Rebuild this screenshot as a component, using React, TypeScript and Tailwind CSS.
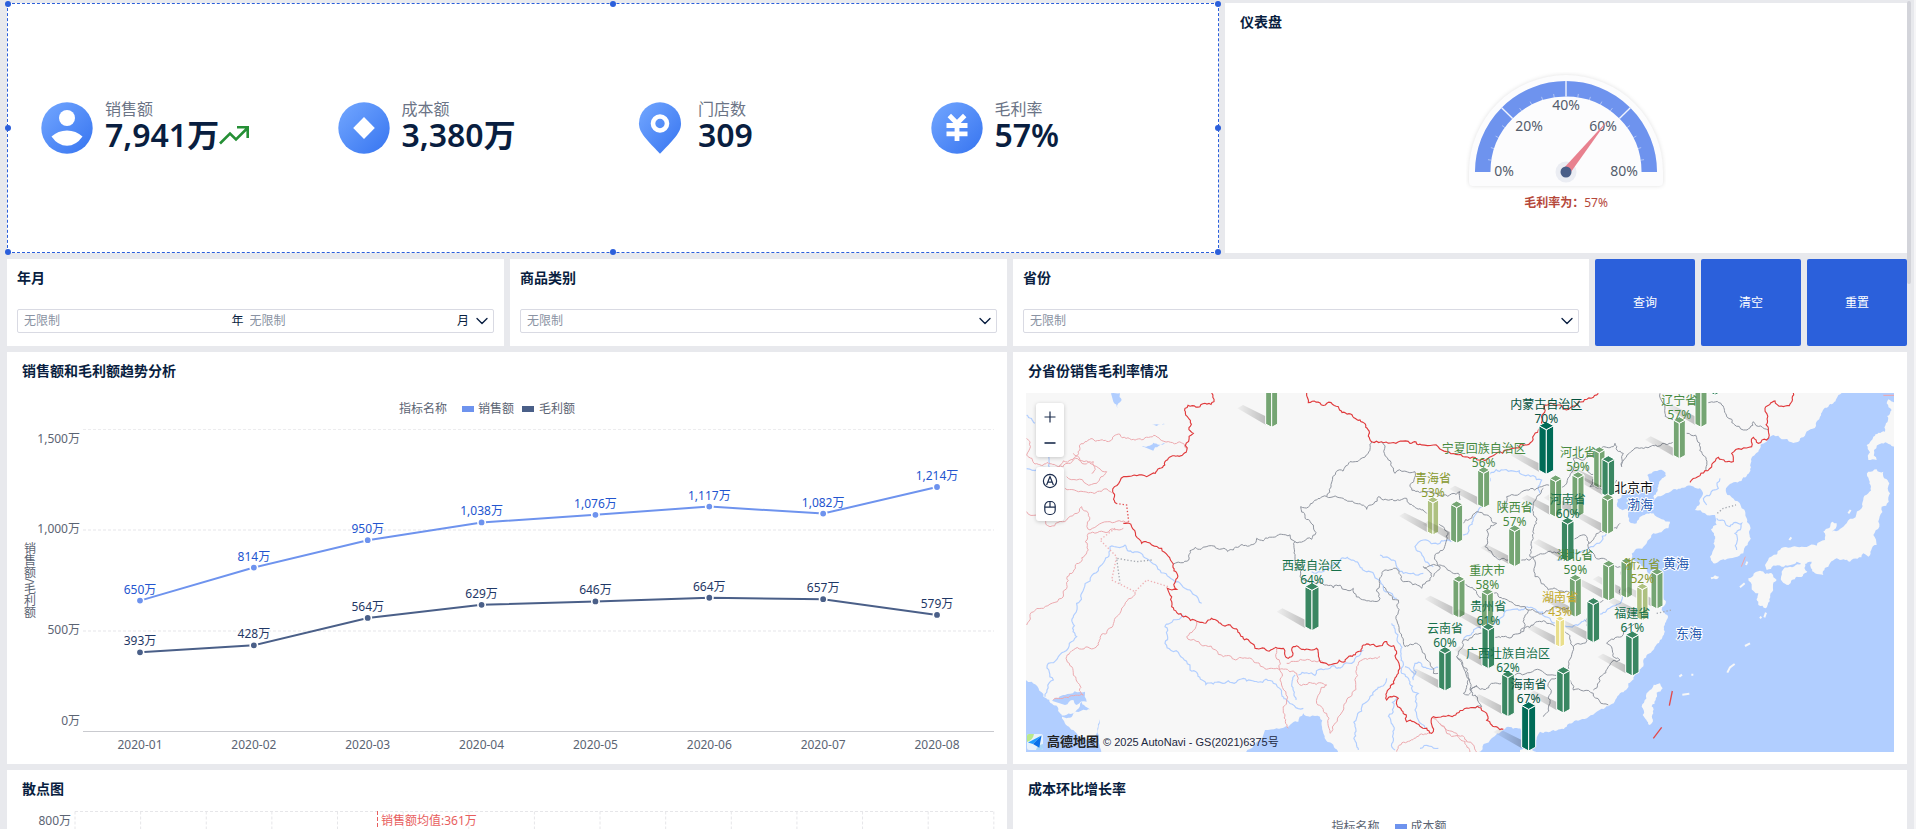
import type { ReactNode } from "react";
import { ChevronDown } from "lucide-react";

const PANEL = "bg-white min-w-0";
const TITLE = "text-sm font-bold text-[#091e40]";

/* ---------- KPI cards ---------- */

function KpiIcon({ kind }: { kind: string }) {
  const fill = `url(#kpi-${kind})`;
  return (
    <svg viewBox="0 0 52 52" className="size-[52px] shrink-0" aria-hidden="true">
      <defs>
        <linearGradient id={`kpi-${kind}`} x1="0" y1="0" x2="1" y2="1">
          <stop offset="0" stopColor="#73a7ff" />
          <stop offset="1" stopColor="#3674f0" />
        </linearGradient>
      </defs>
      {kind !== "pin" && <circle cx="26" cy="26" r="25.7" fill={fill} />}
      {kind === "user" && (
        <g fill="#fff">
          <circle cx="26" cy="16" r="8" />
          <path d="M10.500 34.500Q17 28.500 26 28.500T41.500 34.500Q35 43.800 26 43.800T10.500 34.500Z" />
        </g>
      )}
      {kind === "diamond" && <path d="M26 15L36.800 26L26 37L15.200 26Z" fill="#fff" />}
      {kind === "pin" && (
        <>
          <path d="M26 .3A21 21 0 0 1 47 21.300C47 29 43.500 34 26 51.700C8.500 34 5 29 5 21.300A21 21 0 0 1 26 .3Z" fill={fill} />
          <circle cx="26" cy="21.500" r="7" fill="none" stroke="#fff" strokeWidth="4.600" />
        </>
      )}
      {kind === "yuan" && (
        <path d="M18.300 13.500L26 21.300L33.700 13.500M15.500 23.500H36.500M15.500 31.800H36.500M26 21V39" fill="none" stroke="#fff" strokeWidth="4.800" />
      )}
    </svg>
  );
}

const KPIS = [
  { kind: "user", label: "销售额", value: "7,941万", up: true },
  { kind: "diamond", label: "成本额", value: "3,380万", up: false },
  { kind: "pin", label: "门店数", value: "309", up: false },
  { kind: "yuan", label: "毛利率", value: "57%", up: false },
];

const HANDLES = [
  "left-0 top-0", "left-1/2 top-0", "left-full top-0",
  "left-0 top-1/2", "left-full top-1/2",
  "left-0 top-full", "left-1/2 top-full", "left-full top-full",
];

function KpiPanel() {
  return (
    <section className={`${PANEL} relative border border-dashed border-[#2b5fdb] grid grid-cols-4 items-center px-3`}>
      {KPIS.map((k) => (
        <div key={k.label} className="flex items-center gap-3 pl-[21px]">
          <KpiIcon kind={k.kind} />
          <div className="pb-[6px]">
            <div className="text-base leading-5 text-[#6b7486]">{k.label}</div>
            <div className="flex items-center">
              <span className="text-[32px] leading-8 font-semibold text-[#091e40]">{k.value}</span>
              {k.up && (
                <svg viewBox="0 0 30 20" className="w-[30px] h-5" fill="none" stroke="#258f35" strokeWidth="2.600" aria-hidden="true">
                  <path d="M1 18.500L11 8.500L17 14.500L28 3.500M18 2.300H28.700V13" />
                </svg>
              )}
            </div>
          </div>
        </div>
      ))}
      {HANDLES.map((h) => (
        <span key={h} className={`absolute size-[6px] rounded-full bg-[#2b5fdb] -translate-x-1/2 -translate-y-1/2 ${h}`} />
      ))}
    </section>
  );
}

/* ---------- Gauge ---------- */

function polar(r: number, deg: number): [number, number] {
  const a = (deg * Math.PI) / 180;
  return [100 + r * Math.cos(a), 100 - r * Math.sin(a)];
}

function Gauge() {
  const ticks = Array.from({ length: 21 }, (_, i) => i).filter((i) => i > 0 && i < 20);
  return (
    <svg viewBox="0 0 200 148" className="w-[200px] h-[148px]" fontSize="14">
      <path d="M3 100A97 97 0 0 1 197 100V110Q197 114 193 114H7Q3 114 3 110Z" fill="#fcfcfd" className="drop-shadow-[0_0_2px_rgba(0,0,0,0.12)]" />
      <path d="M16.700 100A83.300 83.300 0 0 1 183.300 100" fill="none" stroke="#6e93ee" strokeWidth="15.500" />
      {ticks.map((i) => {
        const major = i % 5 === 0;
        const [x1, y1] = polar(75.5, 180 - i * 9);
        const [x2, y2] = polar(major ? 91 : 79, 180 - i * 9);
        return <line key={i} x1={x1} y1={y1} x2={x2} y2={y2} stroke="#fff" strokeOpacity={major ? 0.9 : 0.45} strokeWidth={major ? 1.4 : 1} />;
      })}
      <g fill="#545d6c" textAnchor="middle">
        <text x="38" y="104">0%</text>
        <text x="63" y="59">20%</text>
        <text x="100" y="38">40%</text>
        <text x="137" y="59">60%</text>
        <text x="158" y="104">80%</text>
      </g>
      <circle cx="100" cy="100" r="10.500" fill="#ebedf3" />
      <path d="M97 97L142 48L103.500 102Z" fill="#e8818f" />
      <circle cx="100" cy="100" r="5.500" fill="#4a5f88" />
      <text x="100" y="135" fontSize="12" textAnchor="middle" fill="#b5483a">
        <tspan fontWeight="700">毛利率为：</tspan>57%
      </text>
    </svg>
  );
}

/* ---------- Filters ---------- */

const FIELD = "h-6 border border-[#d9dae3] rounded-[2px] text-xs";

function SelectFilter({ id, title }: { id: string; title: string }) {
  return (
    <section className={`${PANEL} px-[10px] pt-[9px] pb-[13px] flex flex-col justify-between`}>
      <label htmlFor={id} className={`${TITLE} leading-5`}>{title}</label>
      <div className="relative">
        <select id={id} className={`${FIELD} block w-full appearance-none bg-white pl-[6px] pr-6 text-[#8a93a3] outline-none`}>
          <option>无限制</option>
        </select>
        <ChevronDown className="pointer-events-none absolute right-[2px] top-[2px] size-5 text-[#091e40]" strokeWidth={1.6} />
      </div>
    </section>
  );
}

function DateFilter() {
  const input = "min-w-0 flex-1 bg-transparent outline-none text-[#091e40] placeholder:text-[#8a93a3]";
  return (
    <section className={`${PANEL} px-[10px] pt-[9px] pb-[13px] flex flex-col justify-between`}>
      <h2 className={`${TITLE} leading-5`}>年月</h2>
      <div className={`${FIELD} flex items-center pl-[6px] pr-[1px] text-[#091e40]`}>
        <input id="year" className={input} placeholder="无限制" />
        <label htmlFor="year" className="pr-[6px]">年</label>
        <input id="month" className={input} placeholder="无限制" />
        <label htmlFor="month" className="pr-[3px]">月</label>
        <button type="button" aria-label="展开">
          <ChevronDown className="size-5" strokeWidth={1.6} />
        </button>
      </div>
    </section>
  );
}

/* ---------- Trend chart ---------- */

const SALES = [650, 814, 950, 1038, 1076, 1117, 1082, 1214];
const PROFIT = [393, 428, 564, 629, 646, 664, 657, 579];
const px = (i: number) => 140 + i * 113.86;
const py = (v: number) => 731.5 - v * 0.2014;

function Series({ data, color, text }: { data: number[]; color: string; text: string }) {
  return (
    <g>
      <polyline points={data.map((v, i) => `${px(i)},${py(v)}`).join(" ")} fill="none" stroke={color} strokeWidth="2" />
      {data.map((v, i) => (
        <g key={i}>
          <circle cx={px(i)} cy={py(v)} r="3.700" fill={color} stroke="#fff" strokeWidth="1.600" />
          <text x={px(i)} y={py(v) - 7} textAnchor="middle" fill={text}>{`${v.toLocaleString("en-US")}万`}</text>
        </g>
      ))}
    </g>
  );
}

function TrendChart() {
  return (
    <svg viewBox="7 390 1000 374" className="block w-full" fontSize="12" fill="#5b6473">
      <text x="399" y="413">指标名称</text>
      <rect x="462" y="406" width="12" height="6" fill="#6e93ee" />
      <text x="478" y="413">销售额</text>
      <rect x="522" y="406" width="12" height="6" fill="#4a5f88" />
      <text x="539" y="413">毛利额</text>
      <text x="29" y="542" className="[writing-mode:vertical-rl]">销售额/毛利额</text>
      <g textAnchor="end">
        <text x="80" y="443">1,500万</text>
        <text x="80" y="533">1,000万</text>
        <text x="80" y="634">500万</text>
        <text x="80" y="725">0万</text>
      </g>
      <g stroke="#ececee" strokeDasharray="3 2">
        <path d="M83 429.500H994" />
        <path d="M83 530H994M83 631H994" strokeWidth="2" stroke="#f2f2f4" />
      </g>
      <path d="M83 731.500H994" stroke="#c9cacf" />
      {SALES.map((_, i) => (
        <text key={i} x={px(i)} y="749" textAnchor="middle">{`2020-0${i + 1}`}</text>
      ))}
      <Series data={SALES} color="#6e93ee" text="#2355cf" />
      <Series data={PROFIT} color="#4a5f88" text="#1f3866" />
    </svg>
  );
}

function ScatterChart() {
  return (
    <svg viewBox="7 808 1000 100" className="block w-full" fontSize="12">
      <g stroke="#e6e6e9" strokeDasharray="3 2" fill="none">
        <path d="M75 811.500H994" />
        {Array.from({ length: 15 }, (_, i) => (
          <path key={i} d={`M${75 + i * 65.63} 811.5V908`} />
        ))}
      </g>
      <text x="71" y="825" textAnchor="end" fill="#5b6473">800万</text>
      <path d="M377.500 811V908" stroke="#e85e5e" strokeDasharray="4 2" />
      <text x="381" y="825" fill="#e85e5e">销售额均值:361万</text>
    </svg>
  );
}

/* ---------- Map ---------- */

type P = [number, number];

/* Midpoint displacement gives borders and coasts their irregular outline. */
function rough(src: string, amp = 0.25, min = 9): string {
  const pts: P[] = src.trim().split(/\s+/).map((p) => p.split(",").map(Number) as P);
  const out: P[] = [pts[0]];
  const split = (a: P, b: P) => {
    const dx = b[0] - a[0];
    const dy = b[1] - a[1];
    const len = Math.hypot(dx, dy);
    if (len < min || len > 500) {
      out.push(b);
      return;
    }
    const s = Math.sin(a[0] * 12.9 + a[1] * 78.2 + b[0] * 37.7 + b[1] * 4.1) * 43758.5;
    const k = (s - Math.floor(s) - 0.5) * 2 * (len > 50 ? amp * 0.5 : amp);
    const m: P = [(a[0] + b[0]) / 2 - dy * k, (a[1] + b[1]) / 2 + dx * k];
    split(a, m);
    split(m, b);
  };
  for (let i = 1; i < pts.length; i++) split(pts[i - 1], pts[i]);
  return "M" + out.map((p) => `${p[0].toFixed(1)} ${p[1].toFixed(1)}`).join("L");
}

const SEAS = [
  "2495,39 2480,55 2455,80 2430,110 2418,138 2380,172 2345,187 2315,178 2290,165 2270,185 2245,215 2223,238 2223,262 2200,292 2160,312 2148,325 2152,345 2175,362 2195,385 2210,415 2217,455 2213,495 2200,520 2175,532 2145,540 2110,550 2100,530 2115,500 2112,460 2103,448 2120,435 2115,405 2085,400 2055,390 2070,370 2078,345 2070,325 2030,318 1990,328 1960,345 1932,362 1930,350 1945,315 1968,288 1960,272 1935,273 1912,285 1925,310 1910,330 1840,340 1822,358 1822,380 1855,390 1858,425 1880,430 1895,408 1930,400 1955,418 1980,425 1975,445 1930,460 1910,490 1875,510 1865,535 1900,560 1935,590 1955,630 1968,665 1955,690 1972,705 1962,745 1950,780 1930,810 1900,840 1880,880 1855,910 1830,940 1800,975 1760,995 1710,1020 1670,1040 1630,1050 1590,1055 1580,1080 1560,1050 1480,1050 1445,1075 1405,1117 2655,1117 2655,39",
  "46,900 65,905 100,950 130,975 150,1000 160,1020 190,1050 230,1080 258,1065 265,1015 275,1130 46,1130",
  "125,962 165,945 225,935 230,965 200,975 190,960 165,975",
  "150,1008 200,990 215,965 240,988 200,995 170,1015",
  "765,1050 800,1045 835,1040 865,1025 880,1000 900,1010 930,1010 940,1060 985,1117 980,1160 710,1160 708,1117 755,1080",
  "303,40 330,40 335,60 322,85 310,65", "395,198 430,188 465,188 430,212", "425,132 465,132 440,138",
];

const ISLANDS = [
  "2575,275 2600,268 2620,275 2638,310 2640,340 2615,380 2608,440 2590,465 2600,495 2575,530 2560,520 2520,545 2480,535 2460,550 2440,585 2415,580 2405,545 2360,545 2315,560 2270,570 2265,555 2310,510 2360,500 2420,497 2445,480 2440,455 2468,425 2480,430 2465,455 2510,430 2555,385 2575,340 2577,300 2575,275",
  "2655,70 2635,58 2630,70 2645,90 2628,130 2625,155 2590,170 2570,195 2575,240 2600,240 2592,210 2615,190 2655,200",
  "2315,575 2340,560 2385,550 2392,575 2360,590 2335,615 2317,605 2315,575",
  "2215,595 2250,572 2285,580 2300,600 2282,640 2268,685 2245,675 2245,640 2225,620 2215,595",
  "1950,910 1958,925 1930,1000 1918,1035 1898,1005 1895,980 1920,930 1950,910",
  "2102,592 2115,586 2127,590 2118,598 2104,598 2102,592",
  "1530,1110 1560,1100 1580,1117 1530,1117",
];

const RED = [
  "605,39 612,65 525,85 550,160 530,212 465,245 410,290 350,290 308,335 318,370",
  "340,430 365,440 395,490 455,505 490,552 500,628 472,625 485,680 565,725 605,715 735,805 820,805 835,835 850,800 920,805 940,848 1005,845 1060,795 1100,800 1130,785 1160,820 1165,880 1130,960 1165,955 1190,1025 1265,1060 1270,1010 1300,1008 1340,1000 1390,983 1430,1000 1445,1035 1480,1048",
  "890,39 895,68 985,80 1050,120 1085,185 1200,190 1270,195 1380,235 1490,210 1550,195 1583,157 1605,75 1670,90 1720,65 1765,40",
  "2350,39 2338,77 2295,63 2265,85 2275,150 2270,180 2245,190 2230,172 2225,200 2165,220 2170,245 2125,232 2085,272 2040,307",
];

const GRAY = [
  "490,552 520,548 540,512 670,510 740,475 815,463 855,485 905,478 910,435 885,410 872,380 950,350 968,290 1020,245 1075,220 1085,185",
  "950,350 1000,355 1070,388 1105,350 1190,355 1250,400 1300,440 1310,480 1280,520 1290,560 1270,590",
  "1115,185 1135,240 1155,280 1215,275 1200,320 1240,335 1300,345 1350,335 1350,360",
  "855,485 855,530 870,590 950,615 1030,625 1065,660 1110,655 1125,570 1160,565 1180,605 1235,625 1265,590 1240,560 1310,565 1345,580 1400,640 1450,665",
  "1120,620 1165,660 1175,770 1185,800 1220,790 1270,880 1285,880",
  "1340,830 1370,865 1360,940 1375,945 1400,915",
  "1600,325 1570,370 1570,450 1560,530 1575,590 1615,630 1680,640",
  "1360,430 1395,400 1430,405 1460,430 1430,450 1425,500 1470,540 1520,545 1560,540 1650,515",
  "1470,390 1490,350 1550,330 1595,320 1660,320 1690,270 1690,235 1780,200 1815,190 1840,220 1835,260 1870,210 1920,200 1990,185",
  "1690,480 1730,470 1740,510 1780,535 1830,560 1850,600 1830,640",
  "1735,490 1770,455 1830,430", "1730,260 1770,290 1740,320 1790,330 1820,300",
  "1340,830 1360,780 1410,760 1480,770 1530,760 1555,690 1510,670 1440,630",
  "1340,830 1370,890 1380,930 1450,910 1530,880 1590,870 1620,885 1670,890",
  "1530,760 1570,735 1610,730 1670,760 1690,800 1675,860 1690,930 1750,940 1795,975",
  "1750,930 1770,890 1830,840 1790,790 1835,770 1880,730", "1600,1010 1620,970 1615,910 1670,890",
  "1690,800 1720,790 1740,700 1780,660", "1380,930 1415,980 1390,983", "1555,690 1600,700 1640,680 1700,700",
  "2095,68 2135,75 2150,110 2200,150 2230,125 2275,150", "2030,160 2070,190 2088,270", "1950,40 1965,100 1990,120",
];

const PINK = [
  "50,175 50,225 75,252 145,260 210,205 225,185 300,183 330,163 370,178 450,178 500,190 530,205",
  "145,260 190,240 240,250 290,275 260,310 200,300 170,290", "165,325 220,335 305,338", "190,220 210,240 250,245 245,280",
  "50,395 80,405 120,440 170,420 215,380 235,400 240,450 300,425 355,425",
  "340,445 235,460 235,510 190,575 155,655 100,685 60,710 50,735",
  "375,635 340,680 290,760 240,805 190,810 170,840 190,885 220,945 130,960",
  "560,725 530,770 640,830 780,865 860,880 865,910 950,915 920,970 950,1000 960,1060 1010,960 1040,860 1110,830",
  "800,805 810,900 830,960 835,1045", "830,850 940,852", "1270,1015 1310,1060 1370,1085 1400,1117", "1160,1115 1220,1070 1260,1060",
  "1290,1030 1340,1060 1380,1117",
];

const RIVERS = [
  "105,950 130,900 115,850 200,770 215,640 285,540 300,500 345,495 400,530 490,600 540,630 575,670",
  "520,705 465,740 465,790 540,870 610,912 700,895 790,910 830,960 880,985",
  "865,885 960,865 1060,810", "855,885 858,960", "905,575 960,565 1020,538 1080,575 1120,625 1160,655",
  "1110,525 1150,540 1180,580 1240,580",
  "1270,560 1240,530 1215,500 1240,480 1290,490 1350,470 1430,360 1440,280 1480,270 1540,285 1595,300 1590,340",
  "1360,780 1430,730 1500,690 1570,685 1620,715 1670,740 1790,690 1850,640",
  "1145,730 1175,880 1225,940 1215,990 1245,1045", "1130,895 1080,950 1035,1040 1045,1110", "1160,950 1155,1110",
  "2130,295 2125,325 2085,350 2090,375", "2120,415 2160,440 2195,430 2175,460 2180,510",
  "50,105 75,130", "118,215 118,262 50,266", "1640,540 1700,520 1750,500 1790,460", "1230,1105 1285,1105",
  "1185,860 1210,900 1215,850 1290,865",
];

const DARKEST = "#006b57";
const DARK = "#3a8762";
const MID = "#75a573";
const LIGHT = "#aec181";
const YELLOW = "#eadf8c";

const BARS: [number, number, number, number, string][] = [
  [785, -10, 142, 18, MID], [2115, -30, 46, 16, DARK], [2073, 0, 142, 18, MID],
  [2008, 110, 236, 18, MID], [1609, 125, 283, 22, DARKEST], [1768, 200, 325, 17, MID],
  [1795, 227, 352, 19, DARK], [1421, 260, 384, 18, MID], [1704, 275, 410, 18, MID],
  [1637, 285, 412, 18, MID], [1793, 342, 463, 18, MID], [1269, 350, 465, 17, LIGHT],
  [1340, 363, 490, 18, MID], [1673, 412, 545, 19, DARK], [1514, 435, 560, 18, MID],
  [1850, 533, 655, 17, MID], [1796, 541, 663, 18, MID], [1941, 565, 687, 18, MID],
  [1696, 583, 712, 18, MID], [1347, 587, 714, 18, MID], [906, 608, 752, 21, DARK],
  [1897, 610, 722, 17, LIGHT], [1432, 625, 755, 18, MID], [1750, 653, 788, 19, DARK],
  [1650, 708, 802, 14, YELLOW], [1435, 730, 866, 19, DARK], [1867, 753, 888, 20, DARK],
  [1305, 800, 933, 19, DARK], [1660, 860, 999, 20, DARK], [1494, 872, 1010, 19, DARK],
  [1556, 965, 1113, 21, DARKEST],
];

const LABELS: [string, string, number, number, string][] = [
  ["宁夏回族自治区", "56%", 1421, 205, "#46893f"], ["青海省", "53%", 1269, 294, "#86982e"],
  ["西藏自治区", "64%", 906, 556, "#16704a"], ["云南省", "60%", 1305, 746, "#16704a"],
  ["内蒙古自治区", "70%", 1609, 74, "#06523f"], ["河北省", "59%", 1704, 218, "#46893f"],
  ["河南省", "60%", 1673, 358, "#16704a"], ["陕西省", "57%", 1514, 382, "#46893f"],
  ["辽宁省", "57%", 2008, 61, "#46893f"], ["湖北省", "59%", 1696, 527, "#3b8440"],
  ["浙江省", "52%", 1897, 554, "#86982e"], ["重庆市", "58%", 1432, 571, "#46893f"],
  ["贵州省", "61%", 1435, 678, "#16704a"], ["湖南省", "43%", 1650, 651, "#c2a92c"],
  ["福建省", "61%", 1867, 700, "#16704a"], ["广西壮族自治区", "62%", 1494, 820, "#16704a"],
  ["海南省", "67%", 1556, 912, "#06523f"],
];

function Bar({ x, top, bottom, w, color }: { x: number; top: number; bottom: number; w: number; color: string }) {
  const d = w * 0.55;
  return (
    <g>
      <path d={`M${x - w} ${bottom - 8}L${x - w - 85} ${bottom - 57}L${x - w - 68} ${bottom - 67}L${x - w} ${bottom - 33}Z`} fill="url(#bar-shadow)" />
      <g stroke="#fff" strokeWidth="3" strokeLinejoin="round" fill={color}>
        <path d={`M${x - w} ${top + d}L${x} ${top + 2 * d}V${bottom}L${x - w} ${bottom - d}Z`} />
        <path d={`M${x + w} ${top + d}L${x} ${top + 2 * d}V${bottom}L${x + w} ${bottom - d}Z`} />
        <path d={`M${x} ${top}L${x + w} ${top + d}L${x} ${top + 2 * d}L${x - w} ${top + d}Z`} />
      </g>
    </g>
  );
}

function Lines({ data, color, width }: { data: string[]; color: string; width: number }) {
  return <path d={data.map((s) => rough(s)).join("")} fill="none" stroke={color} strokeWidth={width} />;
}

function MapDrawing() {
  return (
    <svg viewBox="0 0 868 359" className="block w-full" fontSize="12">
      <defs>
        <linearGradient id="bar-shadow" x1="0" y1="0" x2="1" y2="0">
          <stop offset="0" stopColor="#000" stopOpacity="0.030" />
          <stop offset="1" stopColor="#000" stopOpacity="0.230" />
        </linearGradient>
      </defs>
      <rect width="868" height="359" fill="#f7f7f7" />
      <g transform="scale(0.33333) translate(-48 -39)">
        <path d={SEAS.map((s) => rough(s, 0.2)).join("Z") + "Z"} fill="#b1ceff" />
        <path d={ISLANDS.map((s) => rough(s, 0.22)).join("Z") + "Z"} fill="#f7f7f7" />
        <Lines data={RIVERS} color="#b1ceff" width={3.5} />
        <Lines data={PINK} color="#eca9ae" width={3} />
        <Lines data={GRAY} color="#90959f" width={3} />
        <Lines data={RED} color="#e0393b" width={3.4} />
        <g fill="none" strokeDasharray="4 6" strokeWidth="4">
          <path d="M318 370L350 375L356 425" stroke="#e24a4c" />
          <path d="M315 445L270 480L320 530L305 600L375 635L410 600L475 620" stroke="#eeb0b4" />
          <path d="M425 540L380 545L320 535L330 610M2122 400L2140 385L2178 375M1940 700L1985 690" stroke="#a5a9b0" />
        </g>
        <path d="M1987 933L1978 977M1955 1042L1930 1075" stroke="#e24a4c" strokeWidth="4" />
        <path d="M2206 530L2194 560M2620 46H2655" stroke="#f0a3a8" strokeWidth="3" />
        <path d="M2152 878L2160 862L2174 852M2205 798L2220 790M2190 622L2204 610M2250 715L2254 710M2263 712L2268 698M2017 944L2038 941M2008 890L2016 884M2044 884H2050M2338 480L2344 472M2515 400L2522 390M2208 555L2212 545" stroke="#f7f7f7" strokeWidth="6" fill="none" />
      </g>
      <g stroke="#fff" strokeWidth="2" paintOrder="stroke" fontSize="13">
        <text x="588" y="99" fill="#111">北京市</text>
        <g fill="#2459b0" textAnchor="middle">
          <text x="614" y="116">渤海</text>
          <text x="650" y="175">黄海</text>
          <text x="663" y="245">东海</text>
        </g>
      </g>
      <g transform="scale(0.33333) translate(-48 -39)">
        {BARS.map(([x, top, bottom, w, color]) => (
          <Bar key={`${x}-${top}`} x={x} top={top} bottom={bottom} w={w} color={color} />
        ))}
      </g>
      {LABELS.map(([name, pct, x, y, color]) => (
        <g key={name} textAnchor="middle" fill={color}>
          <text x={(x - 48) / 3} y={(y - 39) / 3 + 4.5}>{name}</text>
          <text x={(x - 48) / 3} y={(y - 39) / 3 + 18.5}>{pct}</text>
        </g>
      ))}
    </svg>
  );
}

function ControlGroup({ children }: { children: ReactNode }) {
  return <div className="flex w-7 flex-col rounded-[3px] bg-white shadow-[0_1px_4px_rgba(0,0,0,0.2)]">{children}</div>;
}

function ControlButton({ label, children }: { label: string; children: ReactNode }) {
  return (
    <button type="button" aria-label={label} className="grid h-[27px] place-items-center">
      <svg viewBox="0 0 16 16" className="size-4" fill="none" stroke="#1b2c4d" strokeWidth="1.200">{children}</svg>
    </button>
  );
}

function MapView() {
  return (
    <div className="relative overflow-hidden">
      <MapDrawing />
      <div className="absolute left-[10px] top-[10px] flex flex-col gap-[10px]">
        <ControlGroup>
          <ControlButton label="放大"><path d="M8 2.500V13.500M2.500 8H13.500" /></ControlButton>
          <ControlButton label="缩小"><path d="M2.500 7H13.500" strokeWidth="1.600" /></ControlButton>
        </ControlGroup>
        <ControlGroup>
          <ControlButton label="自动">
            <circle cx="8" cy="8" r="6.600" />
            <path d="M4.600 12L8 3.600L11.400 12M5.800 9.200H10.200" />
          </ControlButton>
          <ControlButton label="鼠标">
            <rect x="2.800" y="1.500" width="10.400" height="13" rx="4.500" />
            <path d="M2.800 7.200H13.200M8 1.500V7.200" />
          </ControlButton>
        </ControlGroup>
      </div>
      <div className="absolute bottom-0 left-[1px] flex h-5 items-center text-[#1c2740]">
        <svg viewBox="0 0 16 16" className="mr-1 size-4" aria-hidden="true">
          <rect width="16" height="16" rx="2" fill="#e8f1fa" />
          <path d="M0 2Q0 0 2 0H7Q6 6 0 8Z" fill="#b9e98c" />
          <path d="M9 16Q10 11 16 10V14Q16 16 14 16Z" fill="#a9d6f7" />
          <path d="M14.500 1.500L1 8.600L6 10Z" fill="#1f9bff" />
          <path d="M14.500 1.500L6 10L12.300 13.800Z" fill="#0a6fe8" />
        </svg>
        <b className="text-[13px] text-[#222]">高德地图</b>
        <span className="ml-1 text-[11px] font-['Liberation_Sans','Noto_Sans_CJK_SC',sans-serif]">© 2025 AutoNavi - GS(2021)6375号</span>
      </div>
    </div>
  );
}

/* ---------- Page ---------- */

export default function App() {
  return (
    <main className="relative h-screen overflow-hidden border-r-2 border-[#f5f5f7] bg-[#e8e9ed] pl-[7px] pr-[7px] pt-[3px] font-['Noto_Sans','Noto_Sans_CJK_SC',sans-serif]">
      <div className="flex flex-col gap-[6px]">
        <div className="grid h-[250px] grid-cols-[1212fr_682fr] gap-[6px]">
          <KpiPanel />
          <section className={`${PANEL} px-[15px]`}>
            <h2 className={`${TITLE} pt-[9px] leading-5`}>仪表盘</h2>
            <div className="flex justify-center pt-10">
              <Gauge />
            </div>
          </section>
        </div>

        <div className="grid h-[87px] grid-cols-[497fr_497fr_576fr_100fr_100fr_100fr] gap-[6px]">
          <DateFilter />
          <SelectFilter id="category" title="商品类别" />
          <SelectFilter id="province" title="省份" />
          {["查询", "清空", "重置"].map((t) => (
            <button key={t} type="button" className="rounded-[2px] bg-[#2b60db] text-xs text-white">{t}</button>
          ))}
        </div>

        <div className="grid grid-cols-[1000fr_894fr] gap-[6px]">
          <section className={PANEL}>
            <h2 className={`${TITLE} px-[15px] pt-[9px] pb-[9px] leading-5`}>销售额和毛利额趋势分析</h2>
            <TrendChart />
          </section>
          <section className={`${PANEL} px-[13px] pb-3`}>
            <h2 className={`${TITLE} px-[2px] pt-[9px] pb-3 leading-5`}>分省份销售毛利率情况</h2>
            <MapView />
          </section>
        </div>

        <div className="grid grid-cols-[1000fr_894fr] gap-[6px]">
          <section className={PANEL}>
            <h2 className={`${TITLE} px-[15px] pt-[9px] pb-[9px] leading-5`}>散点图</h2>
            <ScatterChart />
          </section>
          <section className={PANEL}>
            <h2 className={`${TITLE} px-[15px] pt-[9px] pb-[9px] leading-5`}>成本环比增长率</h2>
            <div className="flex items-center justify-center pr-[142px] pt-[11px] text-xs text-[#5b6473]">
              <span>指标名称</span>
              <span className="ml-[15px] mr-1 h-[6px] w-3 bg-[#6e93ee]" />
              <span>成本额</span>
            </div>
          </section>
        </div>
      </div>
      <div className="absolute right-[3px] top-[1px] h-[283px] w-1 rounded-full bg-[#d3d4da]" />
    </main>
  );
}
